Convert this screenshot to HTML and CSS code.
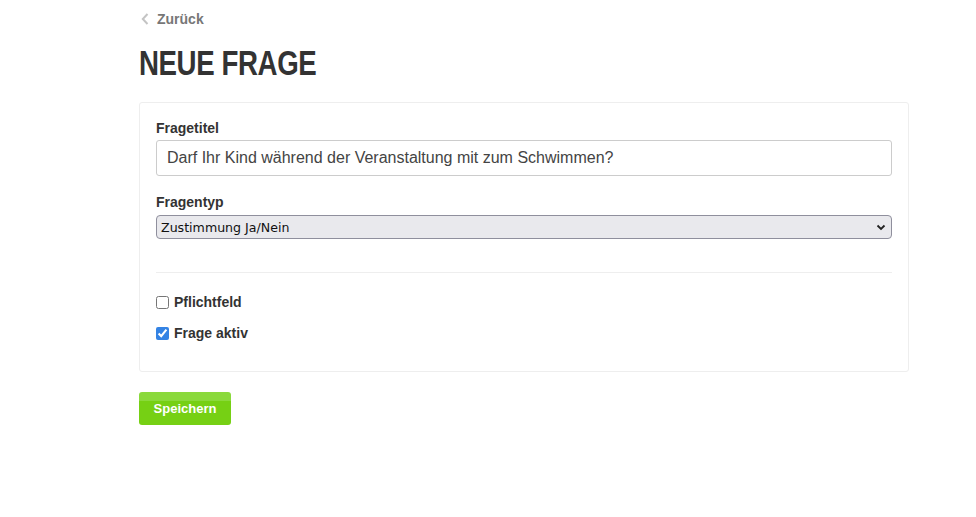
FILE: index.html
```html
<!DOCTYPE html>
<html lang="de">
<head>
<meta charset="utf-8">
<title>Neue Frage</title>
<link rel="stylesheet" href="styles.css">
</head>
<body>
<div class="page">
  <a class="back" href="#">
    <svg class="chev" width="8" height="12" viewBox="0 0 8 12"><path d="M6.5 1 L1.8 6 L6.5 11" fill="none" stroke="#c4c4c4" stroke-width="2"/></svg>
    <span>Zurück</span>
  </a>
  <h1 class="title">NEUE FRAGE</h1>
  <div class="card">
    <label class="label" for="t">Fragetitel</label>
    <input id="t" class="input" type="text" value="Darf Ihr Kind während der Veranstaltung mit zum Schwimmen?">
    <label class="label l2" for="s">Fragentyp</label>
    <div class="selectwrap">
      <select id="s" class="select"><option>Zustimmung Ja/Nein</option></select>
      <svg class="caret" width="10" height="7" viewBox="0 0 10 7"><path d="M1.5 1.5 L5 5 L8.5 1.5" fill="none" stroke="#222" stroke-width="1.8"/></svg>
    </div>
    <div class="sep"></div>
    <label class="check"><input type="checkbox"><span>Pflichtfeld</span></label>
    <label class="check c2"><input type="checkbox" checked><span>Frage aktiv</span></label>
  </div>
  <button class="btn">Speichern</button>
</div>
</body>
</html>
```
FILE: styles.css
```css
html, body { margin: 0; padding: 0; background: #fff; }
body { font-family: "Liberation Sans", Arial, sans-serif; color: #333; }
.page { margin-left: 139px; width: 770px; padding-top: 9px; }
.back { display: flex; align-items: center; gap: 8px; text-decoration: none; color: #777; font-weight: bold; font-size: 14px; height: 20px; padding-left: 2px; }
.chev { display: block; }
.title { margin: 14px 0 0; height: 40px; font-family: "Liberation Sans Narrow", "Liberation Sans", sans-serif; font-weight: bold; font-size: 35px; line-height: 40px; color: #333; letter-spacing: -0.5px; transform: scaleX(0.79); transform-origin: left; white-space: nowrap; }
.card { margin-top: 19px; border: 1px solid #eeeeee; border-radius: 3px; padding: 15px 16px 28px; display: flex; flex-direction: column; }
.label { font-weight: bold; font-size: 14px; line-height: 20px; color: #333; }
.l2 { margin-top: 16px; }
.input { margin-top: 2px; height: 36px; box-sizing: border-box; border: 1px solid #ccc; border-radius: 3px; padding: 0 10px; font-family: "Liberation Sans", Arial, sans-serif; font-size: 16px; color: #444; background: #fff; }
.selectwrap { position: relative; margin-top: 3px; }
.select { width: 100%; height: 24px; box-sizing: border-box; appearance: none; -webkit-appearance: none; border: 1px solid #8f8f9d; border-radius: 4px; background: #e9e9ed; font-family: "DejaVu Sans", "Noto Sans", sans-serif; font-size: 12.6px; color: #111; padding: 0 4px; }
.caret { position: absolute; right: 6px; top: 9px; pointer-events: none; }
.sep { margin-top: 33px; border-top: 1px solid #eeeeee; }
.check { display: flex; align-items: center; gap: 5px; margin-top: 19px; font-weight: bold; font-size: 14px; line-height: 20px; color: #333; }
.c2 { margin-top: 11px; }
.check input { margin: 0; width: 13px; height: 13px; accent-color: #3483e4; }
.btn { margin-top: 20px; width: 92px; height: 33px; border: 0; border-radius: 3px; color: #fff; font-family: "Liberation Sans", Arial, sans-serif; font-weight: bold; font-size: 13px; background: linear-gradient(#8ad93b 0, #8ad93b 9px, #76d014 9px, #76d014 100%); padding: 0; }
```
